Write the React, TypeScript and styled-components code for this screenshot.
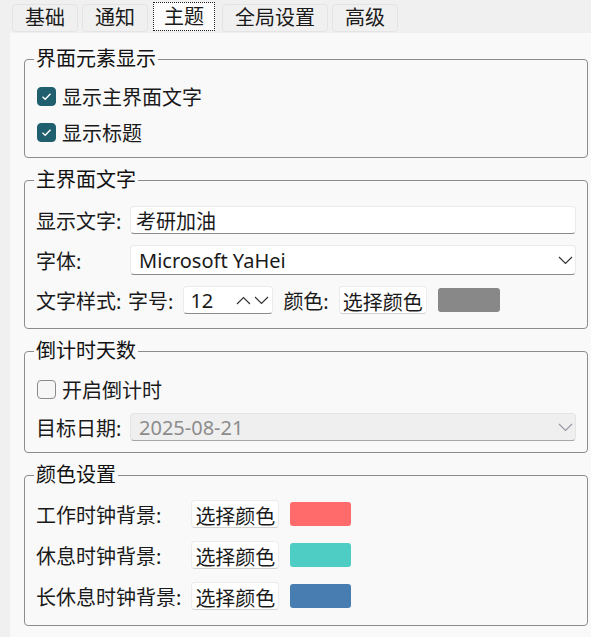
import React, { ReactElement } from "react";
import styled, { createGlobalStyle } from "styled-components";

const texts = {
  tabs: ["基础", "通知", "主题", "全局设置", "高级"],
  activeTab: 2,
  displayTitle: "界面元素显示",
  showMainText: "显示主界面文字",
  showTitle: "显示标题",
  mainTextTitle: "主界面文字",
  textLabel: "显示文字:",
  textValue: "考研加油",
  fontLabel: "字体:",
  fontValue: "Microsoft YaHei",
  styleLabel: "文字样式:",
  sizeLabel: "字号:",
  sizeValue: "12",
  colorLabel: "颜色:",
  pickColor: "选择颜色",
  countdownTitle: "倒计时天数",
  enableCountdown: "开启倒计时",
  dateLabel: "目标日期:",
  dateValue: "2025-08-21",
  colorsTitle: "颜色设置",
};

const clockColors = [
  { label: "工作时钟背景:", color: "#ff6b6b" },
  { label: "休息时钟背景:", color: "#4ecdc4" },
  { label: "长休息时钟背景:", color: "#477db0" },
];

const GlobalStyle = createGlobalStyle`
  html, body {
    margin: 0;
    padding: 0;
    background: #f0f0f0;
  }
  body {
    font-family: "Noto Sans", "Noto Sans CJK SC", sans-serif;
    font-size: 20px;
    color: #1a1a1a;
  }
`;

const Window = styled.div`
  width: 591px;
  height: 637px;
  overflow: hidden;
  background: #f0f0f0;
  display: flex;
  flex-direction: column;
`;

const TabBar = styled.div`
  display: flex;
  align-items: flex-start;
  gap: 4px;
  height: 33px;
  padding-left: 12px;
  box-sizing: border-box;
`;

const Tab = styled.div<{ $active?: boolean }>`
  box-sizing: border-box;
  height: ${(p) => (p.$active ? 29 : 28)}px;
  margin-top: ${(p) => (p.$active ? 2 : 4)}px;
  margin-left: ${(p) => (p.$active ? 1 : 0)}px;
  margin-right: ${(p) => (p.$active ? 3 : 0)}px;
  padding: 0 ${(p) => (p.$active ? 10 : 12)}px;
  display: flex;
  align-items: center;
  border-radius: ${(p) => (p.$active ? 0 : 4)}px;
  background: ${(p) => (p.$active ? "#fbfbfb" : "#f0f0f0")};
  border: 1px ${(p) => (p.$active ? "dotted #202020" : "solid #e4e4e4")};
  line-height: 1;
  white-space: nowrap;
`;

const Pane = styled.div`
  flex: 1;
  margin-left: 10px;
  background: #f9f9f9;
  padding: 14px 3px 0 14px;
  display: flex;
  flex-direction: column;
  gap: 10px;
`;

const Group = styled.fieldset<{ $pt: number; $pb: number }>`
  margin: 0;
  min-width: 0;
  padding: ${(p) => p.$pt}px 11px ${(p) => p.$pb}px;
  border: 1px solid #8c8c8c;
  border-radius: 4px;
`;

const Legend = styled.legend`
  padding: 0 2px;
  margin-left: -2px;
  line-height: 24px;
  color: #111;
`;

const CheckRow = styled.div<{ $h: number }>`
  display: flex;
  align-items: center;
  gap: 6px;
  height: ${(p) => p.$h}px;
  padding-left: 1px;
  white-space: nowrap;
`;

const Box = styled.span<{ $checked?: boolean }>`
  box-sizing: border-box;
  width: 19px;
  height: 19px;
  border-radius: 4px;
  display: flex;
  align-items: center;
  justify-content: center;
  background: ${(p) => (p.$checked ? "#1f5f6e" : "#f6f6f6")};
  border: 1px solid ${(p) => (p.$checked ? "#1f5f6e" : "#8a8a8a")};
`;

const FormGrid = styled.div<{ $row: number; $gap: number }>`
  display: grid;
  grid-template-columns: 94px 1fr;
  grid-auto-rows: ${(p) => p.$row}px;
  row-gap: ${(p) => p.$gap}px;
  align-items: center;
  white-space: nowrap;
`;

const FullRow = styled.div`
  grid-column: 1 / -1;
`;

const TextInput = styled.input`
  box-sizing: border-box;
  width: 100%;
  height: 28px;
  margin: 0;
  padding: 0 0 0 5px;
  font: inherit;
  color: #1a1a1a;
  background: #fff;
  border: 1px solid #ebebeb;
  border-bottom-color: #8a8a8a;
  border-radius: 4px;
  outline: none;
`;

const Combo = styled.div<{ $disabled?: boolean }>`
  box-sizing: border-box;
  height: ${(p) => (p.$disabled ? 28 : 30)}px;
  display: flex;
  align-items: center;
  justify-content: space-between;
  padding: 0 2px 0 8px;
  background: ${(p) => (p.$disabled ? "#efefef" : "#fff")};
  color: ${(p) => (p.$disabled ? "#8c8c8c" : "#1a1a1a")};
  border: 1px solid ${(p) => (p.$disabled ? "#e4e4e4" : "#ebebeb")};
  border-bottom-color: ${(p) => (p.$disabled ? "#a6a6a6" : "#8a8a8a")};
  border-radius: 4px;
`;

const InlineRow = styled.div`
  display: flex;
  align-items: center;
  gap: 10px;
  margin-left: -2px;
`;

const Spin = styled.div`
  box-sizing: border-box;
  width: 90px;
  height: 28px;
  display: flex;
  align-items: center;
  justify-content: space-between;
  padding: 0 3px 0 6px;
  background: #fff;
  border: 1px solid #ebebeb;
  border-bottom-color: #8a8a8a;
  border-radius: 4px;
`;

const SpinArrows = styled.span`
  display: flex;
  align-items: center;
  gap: 3px;
`;

const ColorButton = styled.button`
  box-sizing: border-box;
  height: 28px;
  margin: 0;
  padding: 0 3px;
  font: inherit;
  color: #1a1a1a;
  background: #fff;
  border: 1px solid #ececec;
  border-bottom-color: #d2d2d2;
  border-radius: 4px;
  white-space: nowrap;
`;

const Swatch = styled.span<{ $color: string; $w: number }>`
  width: ${(p) => p.$w}px;
  height: 24px;
  border-radius: 3px;
  background: ${(p) => p.$color};
  margin-left: 1px;
`;

const ColorGrid = styled.div`
  display: grid;
  grid-template-columns: max-content 88px 61px;
  grid-auto-rows: 28px;
  row-gap: 13px;
  column-gap: 10px;
  align-items: center;
  white-space: nowrap;
`;

const Check = (): ReactElement => (
  <svg width="13" height="13" viewBox="0 0 13 13">
    <polyline points="2.5,6.8 5.2,9.3 10.5,3.8" fill="none" stroke="#fff" strokeWidth="1.4" />
  </svg>
);

const Chevron = ({ up, color = "#333" }: { up?: boolean; color?: string }): ReactElement => (
  <svg width="15" height="9" viewBox="0 0 15 9">
    <polyline
      points={up ? "1,8 7.5,1.5 14,8" : "1,1 7.5,7.5 14,1"}
      fill="none"
      stroke={color}
      strokeWidth="1.2"
    />
  </svg>
);

const CheckBox = ({ checked, label, h }: { checked?: boolean; label: string; h: number }) => (
  <CheckRow $h={h}>
    <Box $checked={checked}>{checked && <Check />}</Box>
    {label}
  </CheckRow>
);

const App = (): ReactElement => (
  <Window>
    <GlobalStyle />
    <TabBar>
      {texts.tabs.map((t, i) => (
        <Tab key={t} $active={i === texts.activeTab}>
          {t}
        </Tab>
      ))}
    </TabBar>
    <Pane>
      <Group $pt={7} $pb={7}>
        <Legend>{texts.displayTitle}</Legend>
        <CheckBox checked label={texts.showMainText} h={36} />
        <CheckBox checked label={texts.showTitle} h={36} />
      </Group>

      <Group $pt={13} $pb={13}>
        <Legend>{texts.mainTextTitle}</Legend>
        <FormGrid $row={30} $gap={10}>
          <span>{texts.textLabel}</span>
          <TextInput defaultValue={texts.textValue} readOnly />
          <span>{texts.fontLabel}</span>
          <Combo>
            {texts.fontValue}
            <Chevron />
          </Combo>
          <span>{texts.styleLabel}</span>
          <InlineRow>
            <span>{texts.sizeLabel}</span>
            <Spin>
              {texts.sizeValue}
              <SpinArrows>
                <Chevron up />
                <Chevron />
              </SpinArrows>
            </Spin>
            <span>{texts.colorLabel}</span>
            <ColorButton>{texts.pickColor}</ColorButton>
            <Swatch $color="#888888" $w={62} />
          </InlineRow>
        </FormGrid>
      </Group>

      <Group $pt={11} $pb={10}>
        <Legend>{texts.countdownTitle}</Legend>
        <FormGrid $row={30} $gap={8}>
          <FullRow>
            <CheckBox label={texts.enableCountdown} h={30} />
          </FullRow>
          <span>{texts.dateLabel}</span>
          <Combo $disabled>
            {texts.dateValue}
            <Chevron color="#9a9aa6" />
          </Combo>
        </FormGrid>
      </Group>

      <Group $pt={13} $pb={15}>
        <Legend>{texts.colorsTitle}</Legend>
        <ColorGrid>
          {clockColors.map((c) => (
            <React.Fragment key={c.label}>
              <span>{c.label}</span>
              <ColorButton>{texts.pickColor}</ColorButton>
              <Swatch $color={c.color} $w={61} />
            </React.Fragment>
          ))}
        </ColorGrid>
      </Group>
    </Pane>
  </Window>
);

export default App;
